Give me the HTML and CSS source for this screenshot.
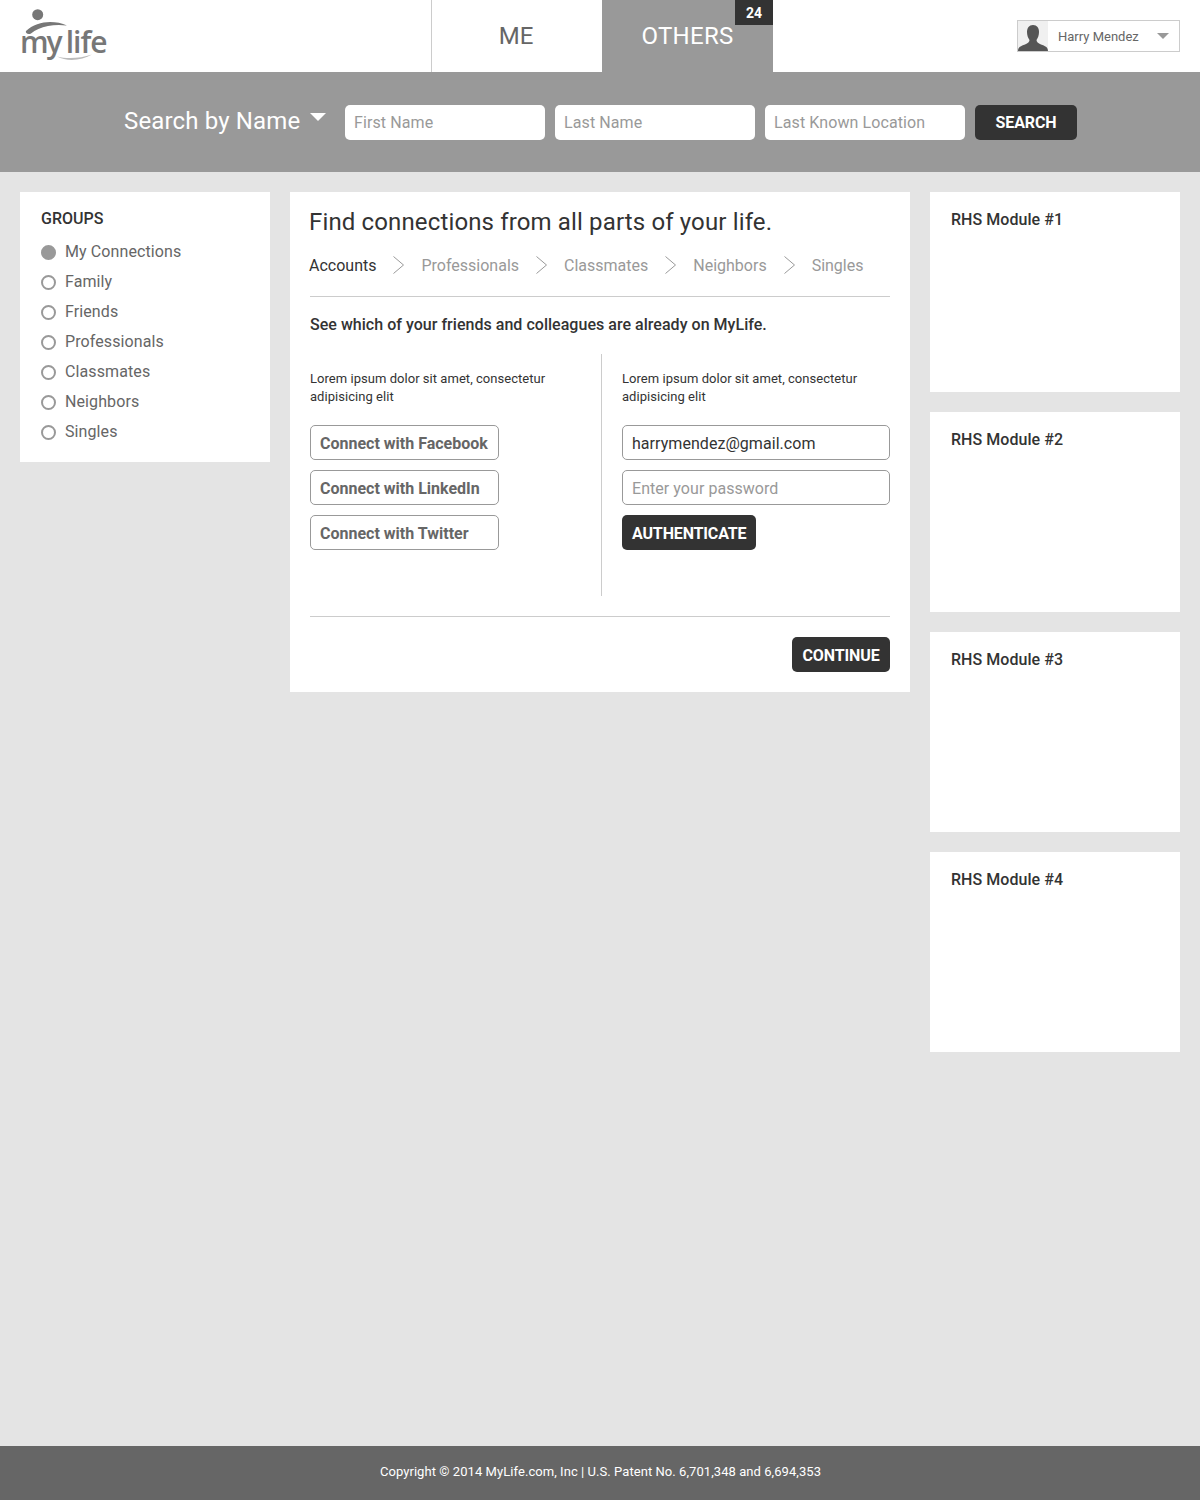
FILE: index.html
```html
<!DOCTYPE html>
<html lang="en">
<head>
  <meta charset="UTF-8">
  <title>MyLife</title>
  <link rel="stylesheet" href="styles.css">
</head>
<body>

  <header class="top-bar">
    <a class="logo" href="#">
      <svg class="logo-mark" width="90" height="62" viewBox="0 0 90 62">
        <circle cx="19.700" cy="14.700" r="5.500" fill="#777"/>
        <path d="M8 31 C14 25 24 22 32 22 C38 22 44 23 49 25.500 C42 24.500 36 24.800 30 26 C23 27.500 17 30 13 33.500 C10 35 7 33 8 31 Z" fill="#777"/>
        <path d="M39 56.500 C49 59 62 58.500 74 54.500 C64 60.500 49 62 39 56.500 Z" fill="#bbb"/>
      </svg>
      <span class="logo-my">my</span><span class="logo-life">life</span>
    </a>
    <nav class="tabs">
      <a class="tab" href="#">ME</a>
      <a class="tab tab-active" href="#">OTHERS<span class="badge">24</span></a>
    </nav>
    <div class="user-menu">
      <svg class="avatar" width="30" height="30" viewBox="0 0 30 30">
        <rect width="30" height="30" fill="#f0f0f0"/>
        <path d="M15 4 C19 4 21 7 21 11 C21 14 20 17 18.500 19 C18.500 21 20 22 23 23.500 C27 25 30 26 30 30 L0 30 C0 26 3 25 7 23.500 C10 22 11.500 21 11.500 19 C10 17 9 14 9 11 C9 7 11 4 15 4 Z" fill="#555"/>
      </svg>
      <span class="user-name">Harry Mendez</span>
      <span class="user-caret"></span>
    </div>
  </header>

  <section class="search-bar">
    <div class="search-label">Search by Name<span class="search-caret"></span></div>
    <input class="search-input" type="text" placeholder="First Name">
    <input class="search-input" type="text" placeholder="Last Name">
    <input class="search-input" type="text" placeholder="Last Known Location">
    <button class="btn-dark btn-search">SEARCH</button>
  </section>

  <main class="content">
    <aside class="groups">
      <h3>GROUPS</h3>
      <ul class="group-list">
        <li><span class="radio radio-on"></span>My Connections</li>
        <li><span class="radio"></span>Family</li>
        <li><span class="radio"></span>Friends</li>
        <li><span class="radio"></span>Professionals</li>
        <li><span class="radio"></span>Classmates</li>
        <li><span class="radio"></span>Neighbors</li>
        <li><span class="radio"></span>Singles</li>
      </ul>
    </aside>

    <section class="wizard">
      <h1>Find connections from all parts of your life.</h1>
      <div class="steps">
        <span class="step step-current">Accounts</span>
        <svg class="chevron" width="11" height="18" viewBox="0 0 11 18"><path d="M0.500 0.500 L10.500 9 L0.500 17.500" fill="none" stroke="#999"/></svg>
        <span class="step">Professionals</span>
        <svg class="chevron" width="11" height="18" viewBox="0 0 11 18"><path d="M0.500 0.500 L10.500 9 L0.500 17.500" fill="none" stroke="#999"/></svg>
        <span class="step">Classmates</span>
        <svg class="chevron" width="11" height="18" viewBox="0 0 11 18"><path d="M0.500 0.500 L10.500 9 L0.500 17.500" fill="none" stroke="#999"/></svg>
        <span class="step">Neighbors</span>
        <svg class="chevron" width="11" height="18" viewBox="0 0 11 18"><path d="M0.500 0.500 L10.500 9 L0.500 17.500" fill="none" stroke="#999"/></svg>
        <span class="step">Singles</span>
      </div>
      <p class="lead">See which of your friends and colleagues are already on MyLife.</p>
      <div class="connect">
        <div class="connect-col connect-left">
          <p class="blurb">Lorem ipsum dolor sit amet, consectetur adipisicing elit</p>
          <button class="btn-outline">Connect with Facebook</button>
          <button class="btn-outline">Connect with LinkedIn</button>
          <button class="btn-outline">Connect with Twitter</button>
        </div>
        <div class="connect-col connect-right">
          <p class="blurb">Lorem ipsum dolor sit amet, consectetur adipisicing elit</p>
          <input class="field" type="text" value="harrymendez@gmail.com">
          <input class="field" type="text" placeholder="Enter your password">
          <button class="btn-dark btn-auth">AUTHENTICATE</button>
        </div>
      </div>
      <div class="wizard-foot">
        <button class="btn-dark btn-continue">CONTINUE</button>
      </div>
    </section>

    <aside class="rhs">
      <div class="module">RHS Module #1</div>
      <div class="module">RHS Module #2</div>
      <div class="module">RHS Module #3</div>
      <div class="module">RHS Module #4</div>
    </aside>
  </main>

  <footer>Copyright © 2014 MyLife.com, Inc | U.S. Patent No. 6,701,348 and 6,694,353</footer>

</body>
</html>
```

FILE: styles.css
```css
* { box-sizing: border-box; }

body {
  margin: 0;
  min-height: 100vh;
  display: flex;
  flex-direction: column;
  background: #e4e4e4;
  font-family: Roboto, 'Liberation Sans', sans-serif;
  color: #333;
}

input, button { font-family: inherit; }

input::placeholder { color: #999; opacity: 1; }

.top-bar {
  height: 72px;
  background: #fff;
  display: flex;
  padding-right: 20px;
}

.logo {
  position: relative;
  width: 431px;
  padding: 20px 0 0 20px;
  color: #777;
  text-decoration: none;
  font-family: 'Open Sans', sans-serif;
  font-weight: 600;
  line-height: 43px;
}

.logo-mark {
  position: absolute;
  left: 18px;
  top: 0;
}

.logo-my {
  position: relative;
  font-size: 30px;
  letter-spacing: -2px;
}

.logo-life {
  position: relative;
  margin-left: 5px;
  font-size: 30px;
  letter-spacing: -1px;
}

.tabs {
  display: flex;
  border-left: 1px solid #ccc;
}

.tab {
  position: relative;
  width: 171px;
  height: 72px;
  line-height: 72px;
  text-align: center;
  font-size: 24px;
  letter-spacing: 0.3px;
  color: #666;
  text-decoration: none;
}

.tab:first-child {
  width: 170px;
  padding-right: 2px;
  letter-spacing: 0;
}

.tab-active {
  background: #999;
  color: #fff;
}

.badge {
  position: absolute;
  top: 0;
  right: 0;
  width: 38px;
  height: 25px;
  background: #333;
  color: #fff;
  font-size: 14px;
  font-weight: 700;
  letter-spacing: 0;
  line-height: 26px;
}

.user-menu {
  width: 163px;
  height: 32px;
  margin: 20px 0 0 auto;
  border: 1px solid #ccc;
  display: flex;
  align-items: center;
  font-size: 13px;
  color: #666;
}

.avatar { flex: none; }

.user-name {
  margin-left: 10px;
  padding-top: 1px;
}

.user-caret {
  margin-left: 18px;
  border-left: 6px solid transparent;
  border-right: 6px solid transparent;
  border-top: 6px solid #999;
}

.search-bar {
  height: 100px;
  background: #999;
  display: flex;
  align-items: center;
  padding-left: 124px;
  gap: 10px;
}

.search-label {
  width: 211px;
  font-size: 24px;
  letter-spacing: 0.15px;
  color: #fff;
  position: relative;
  top: -1px;
}

.search-caret {
  display: inline-block;
  margin-left: 10px;
  vertical-align: 8px;
  border-left: 8px solid transparent;
  border-right: 8px solid transparent;
  border-top: 8px solid #fff;
}

.search-input {
  width: 200px;
  height: 35px;
  border: none;
  border-radius: 5px;
  padding: 1px 9px 0;
  font-size: 16px;
  letter-spacing: 0.1px;
  color: #333;
  background: #fff;
}

.btn-dark {
  height: 35px;
  padding: 1px 10px 0;
  border: none;
  border-radius: 5px;
  background: #333;
  color: #fff;
  font-size: 16px;
  font-weight: 700;
  letter-spacing: -0.1px;
}

.btn-search { width: 102px; }

.btn-auth { letter-spacing: -0.15px; }

.btn-continue { width: 98px; }

.content {
  flex: 1;
  display: flex;
  align-items: flex-start;
  gap: 20px;
  padding: 20px;
}

.groups {
  width: 250px;
  height: 270px;
  background: #fff;
  padding: 17px 21px;
}

.groups h3 {
  margin: 0 0 8px;
  font-size: 16px;
  font-weight: 500;
  line-height: 19px;
  color: #333;
}

.group-list {
  list-style: none;
  margin: 0;
  padding: 0;
}

.group-list li {
  display: flex;
  align-items: center;
  height: 30px;
  font-size: 16px;
  letter-spacing: 0.1px;
  color: #666;
}

.radio {
  width: 15px;
  height: 15px;
  margin-right: 9px;
  border: 2px solid #999;
  border-radius: 50%;
  position: relative;
  top: 1px;
}

.radio-on { background: #999; }

.wizard {
  width: 620px;
  height: 500px;
  background: #fff;
  padding: 15px 20px 20px;
}

.wizard h1 {
  margin: 0 0 0 -1px;
  font-size: 24px;
  font-weight: 400;
  letter-spacing: 0.14px;
  line-height: 30px;
  color: #333;
}

.steps {
  display: flex;
  align-items: center;
  height: 60px;
  padding-bottom: 3px;
  gap: 17px;
  border-bottom: 1px solid #ccc;
  font-size: 16px;
  color: #999;
}

.step-current {
  color: #333;
  margin-left: -1px;
}

.lead {
  margin: 18px 0 20px;
  font-size: 16px;
  font-weight: 500;
  letter-spacing: 0.03px;
  line-height: 19px;
  color: #333;
}

.connect {
  display: flex;
  height: 242px;
}

.connect-col { padding-top: 16px; }

.connect-left {
  width: 292px;
  border-right: 1px solid #ccc;
}

.connect-right {
  flex: 1;
  padding-left: 20px;
}

.blurb {
  margin: 0 0 19px;
  width: 250px;
  font-size: 13px;
  letter-spacing: 0.04px;
  line-height: 18px;
  color: #333;
}

.btn-outline {
  display: block;
  width: 189px;
  height: 35px;
  margin-bottom: 10px;
  padding: 1px 9px 0;
  background: #fff;
  border: 1px solid #999;
  border-radius: 5px;
  text-align: left;
  font-size: 16px;
  font-weight: 700;
  color: #666;
}

.field {
  display: block;
  width: 100%;
  height: 35px;
  margin-bottom: 10px;
  padding: 1px 9px 0;
  border: 1px solid #999;
  border-radius: 5px;
  font-size: 16px;
  letter-spacing: 0.05px;
  color: #333;
}

.wizard-foot {
  margin-top: 20px;
  padding-top: 20px;
  border-top: 1px solid #ccc;
  text-align: right;
}

.rhs {
  width: 250px;
  display: flex;
  flex-direction: column;
  gap: 20px;
}

.module {
  height: 200px;
  background: #fff;
  padding: 18px 21px;
  font-size: 16px;
  font-weight: 500;
  letter-spacing: 0.05px;
  line-height: 19px;
  color: #333;
}

footer {
  height: 54px;
  padding-left: 1px;
  background: #666;
  color: #fff;
  font-size: 13px;
  letter-spacing: 0.06px;
  line-height: 52px;
  text-align: center;
}
```
